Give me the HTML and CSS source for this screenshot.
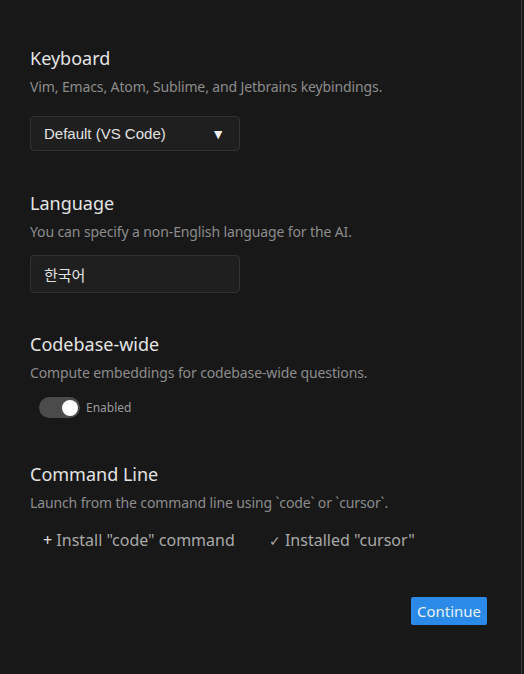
FILE: index.html
```html
<!DOCTYPE html>
<html>
<head>
<meta charset="utf-8">
<link rel="stylesheet" href="styles.css">
</head>
<body>
<div class="page">
  <section class="section s-keyboard">
    <h2 class="title">Keyboard</h2>
    <p class="desc">Vim, Emacs, Atom, Sublime, and Jetbrains keybindings.</p>
    <div class="select box">
      <span class="select-text">Default (VS Code)</span>
      <span class="caret">▼</span>
    </div>
  </section>
  <section class="section s-language">
    <h2 class="title">Language</h2>
    <p class="desc">You can specify a non-English language for the AI.</p>
    <div class="input box">한국어</div>
  </section>
  <section class="section s-codebase">
    <h2 class="title">Codebase-wide</h2>
    <p class="desc">Compute embeddings for codebase-wide questions.</p>
    <div class="toggle-row">
      <span class="toggle"><span class="knob"></span></span>
      <span class="toggle-label">Enabled</span>
    </div>
  </section>
  <section class="section s-cli">
    <h2 class="title">Command Line</h2>
    <p class="desc">Launch from the command line using `code` or `cursor`.</p>
    <div class="cli-row">
      <span class="cli-btn"><span class="plus">+</span> Install "code" command</span>
      <span class="cli-btn installed"><span class="check">✓</span> Installed "cursor"</span>
    </div>
  </section>
  <div class="footer">
    <button class="continue">Continue</button>
  </div>
</div>
</body>
</html>
```
FILE: styles.css
```css
html, body {
  margin: 0;
  padding: 0;
  background: #181818;
}
body {
  width: 524px;
  height: 674px;
  overflow: hidden;
  font-family: "Noto Sans", "Open Sans", sans-serif;
}
.page {
  box-sizing: border-box;
  width: 522px;
  height: 674px;
  border-right: 1px solid #3c3c3c;
  padding: 46px 30px 0 30px;
  display: flex;
  flex-direction: column;
}
.section {
  display: flex;
  flex-direction: column;
  align-items: flex-start;
}
.title {
  margin: 0;
  font-size: 18px;
  line-height: 24px;
  font-weight: 400;
  color: #e4e4e4;
}
.desc {
  margin: 7px 0 0 0;
  font-size: 14px;
  line-height: 20px;
  letter-spacing: -0.12px;
  color: #8c8c8c;
}
.box {
  box-sizing: border-box;
  width: 210px;
  background: #1f1f1f;
  border: 1px solid #323232;
  border-radius: 4px;
}
.select {
  margin-top: 19px;
  height: 35px;
  display: flex;
  align-items: center;
  justify-content: space-between;
  padding: 0 14px 0 13px;
  font-family: "Liberation Sans", Arial, sans-serif;
  font-size: 15px;
  color: #e2e2e2;
}
.caret {
  font-size: 14px;
  color: #f0f0f0;
}
.s-language {
  margin-top: 40px;
}
.input {
  margin-top: 13px;
  height: 38px;
  display: flex;
  align-items: center;
  padding: 0 13px;
  font-family: "Noto Sans CJK KR", sans-serif;
  font-size: 15px;
  color: #e2e2e2;
}
.s-codebase {
  margin-top: 39px;
}
.toggle-row {
  margin-top: 14px;
  margin-left: 9px;
  display: flex;
  align-items: center;
  gap: 6px;
}
.toggle {
  box-sizing: border-box;
  width: 41px;
  height: 21px;
  border-radius: 11px;
  background: #4b4b4b;
  display: flex;
  align-items: center;
  justify-content: flex-end;
  padding-right: 2px;
}
.knob {
  width: 16px;
  height: 16px;
  border-radius: 50%;
  background: #ffffff;
}
.toggle-label {
  font-size: 12px;
  color: #9a9a9a;
}
.s-cli {
  margin-top: 44px;
}
.cli-row {
  margin-top: 17px;
  margin-left: 13px;
  display: flex;
  gap: 34px;
}
.cli-btn {
  font-size: 16px;
  line-height: 20px;
  color: #a8a8a8;
}
.plus {
  color: #e0e0e0;
}
.check {
  font-size: 14px;
  color: #a8a8a8;
}
.footer {
  margin-top: 46px;
  display: flex;
  justify-content: flex-end;
  padding-right: 4px;
}
.continue {
  height: 28px;
  width: 76px;
  padding: 0;
  border: none;
  border-radius: 2px;
  background: #2b8ae8;
  color: #e8f2ff;
  font-family: "Noto Sans", sans-serif;
  font-size: 15px;
}
```
